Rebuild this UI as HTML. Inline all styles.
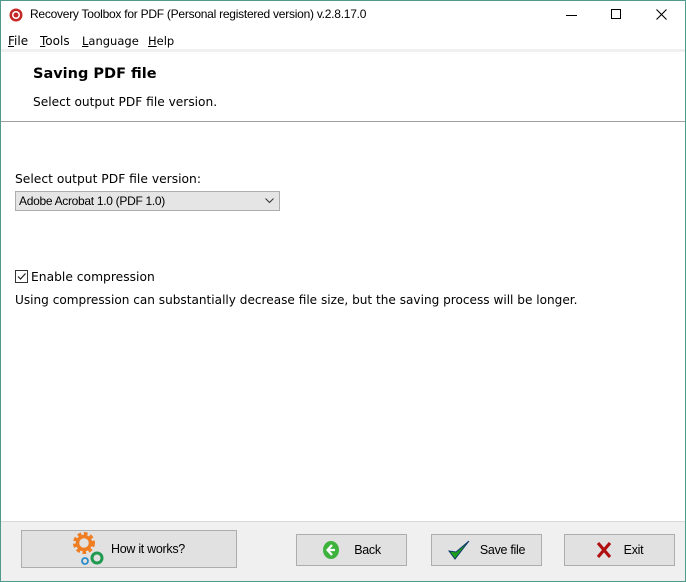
<!DOCTYPE html>
<html><head><style>
*{margin:0;padding:0;box-sizing:border-box}
body{width:686px;height:582px;position:relative;overflow:hidden;background:#fff;font-family:"Liberation Sans",sans-serif;font-size:12px;color:#000}
.win{position:absolute;left:0;top:0;width:686px;height:582px;border:1px solid #4f9a8c}
.a{position:absolute;white-space:nowrap}
.seg{font-family:"DejaVu Sans","Liberation Sans",sans-serif;font-size:12px}
.btn{position:absolute;background:#e1e1e1;border:1px solid #adadad;font-family:"Liberation Sans",sans-serif;font-size:12.5px;display:flex;align-items:center;justify-content:center;letter-spacing:-0.3px}
u{text-decoration:underline}
</style></head><body>
<div class="win"></div>
<svg class="a" style="left:9px;top:8px" width="14" height="14" viewBox="0 0 14 14"><circle cx="7" cy="7" r="6.5" fill="#c62828"/><circle cx="7" cy="7" r="4" fill="#fff"/><circle cx="7" cy="7" r="2.5" fill="#c62828"/></svg>
<div class="a" style="left:30px;top:7px;font-size:12px;letter-spacing:-0.25px">Recovery Toolbox for PDF (Personal registered version) v.2.8.17.0</div>
<div class="a" style="left:566px;top:15px;width:11px;height:1px;background:#000"></div>
<div class="a" style="left:611px;top:9px;width:10px;height:10px;border:1px solid #000"></div>
<svg class="a" style="left:656px;top:9px" width="11" height="11"><path d="M0.5 0.5L10.5 10.5M10.5 0.5L0.5 10.5" stroke="#000" stroke-width="1.1"/></svg>
<div class="a seg" style="left:8px;top:34px"><u>F</u>ile</div>
<div class="a seg" style="left:40px;top:34px"><u>T</u>ools</div>
<div class="a seg" style="left:82px;top:34px;font-size:11.5px"><u>L</u>anguage</div>
<div class="a seg" style="left:148px;top:34px;font-size:11.5px"><u>H</u>elp</div>
<div class="a" style="left:1px;top:49px;width:684px;height:3px;background:#f0f0f0"></div>
<div class="a seg" style="left:33px;top:66px;font-size:14.5px;font-weight:bold">Saving PDF file</div>
<div class="a seg" style="left:33px;top:95px;font-size:12.2px">Select output PDF file version.</div>
<div class="a" style="left:1px;top:121px;width:684px;height:1px;background:#a0a0a0"></div>
<div class="a seg" style="left:15px;top:172px;font-size:12.3px">Select output PDF file version:</div>
<div class="a" style="left:15px;top:191px;width:265px;height:20px;background:#e5e5e5;border:1px solid #adadad"></div>
<div class="a" style="left:19px;top:194px;font-size:12px;letter-spacing:-0.3px">Adobe Acrobat 1.0 (PDF 1.0)</div>
<svg class="a" style="left:265px;top:198px" width="9" height="6"><path d="M0.5 0.5L4.5 4.5L8.5 0.5" stroke="#333" fill="none"/></svg>
<div class="a" style="left:15px;top:270px;width:13px;height:13px;border:1px solid #333;background:#fff"></div>
<svg class="a" style="left:16px;top:271px" width="11" height="11"><path d="M2 5.5L4.5 8L9.5 2.5" stroke="#222" stroke-width="1.2" fill="none"/></svg>
<div class="a seg" style="left:31px;top:270px;font-size:12.3px">Enable compression</div>
<div class="a seg" style="left:15px;top:293px;font-size:12.1px">Using compression can substantially decrease file size, but the saving process will be longer.</div>
<div class="a" style="left:1px;top:521px;width:684px;height:60px;background:#f0f0f0;border-top:1px solid #d8d8d8"></div>
<div class="btn" style="left:21px;top:530px;width:216px;height:38px"><svg width="36" height="34" viewBox="0 0 36 34" style="margin-right:2px"><circle cx="11" cy="11" r="9" fill="none" stroke="#ef7d22" stroke-width="4" stroke-dasharray="3.5 2.5"/><circle cx="11" cy="11" r="6.5" fill="none" stroke="#ef7d22" stroke-width="3.5"/><circle cx="24" cy="26" r="5" fill="none" stroke="#1f9a50" stroke-width="3"/><circle cx="12" cy="29" r="3" fill="none" stroke="#2a8cc8" stroke-width="1.8"/></svg>How it works?</div>
<div class="btn" style="left:296px;top:534px;width:111px;height:32px"><svg width="18" height="20" style="margin-right:14px"><ellipse cx="9" cy="10" rx="8" ry="9" fill="#3db33d"/><path d="M10 5L5.5 10L10 15M6 10H13" stroke="#fff" stroke-width="2.2" fill="none"/></svg>Back</div>
<div class="btn" style="left:431px;top:534px;width:111px;height:32px"><svg width="22" height="22" style="margin-right:10px"><path d="M1 12L7 20L21 2L8 13Z" fill="#1e9e1e" stroke="#0b3a6a" stroke-width="1"/></svg>Save file</div>
<div class="btn" style="left:564px;top:534px;width:111px;height:32px"><svg width="16" height="18" style="margin-right:12px"><path d="M2 2L14 16M14 2L2 16" stroke="#b01010" stroke-width="3.2"/></svg>Exit</div>
</body></html>
